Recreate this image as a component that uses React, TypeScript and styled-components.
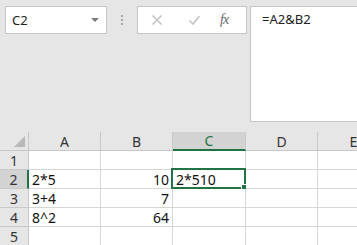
import React from 'react'
import styled, { createGlobalStyle } from 'styled-components'

const GlobalStyle = createGlobalStyle`
    html, body {
        margin: 0;
        padding: 0;
        background: #e6e6e6;
        overflow: hidden;
    }
    body {
        font-family: "Noto Sans", "Liberation Sans", sans-serif;
    }
`

const Page = styled.div`
    width: 357px;
    height: 245px;
    display: flex;
    flex-direction: column;
    background: #e6e6e6;
    overflow: hidden;
`

const FormulaArea = styled.div`
    display: flex;
    align-items: flex-start;
    padding: 6px 0 0 5px;
    height: 132px;
    flex-shrink: 0;
    box-sizing: border-box;
`

const NameBox = styled.div`
    width: 102px;
    height: 28px;
    box-sizing: border-box;
    border: 1px solid #c6c6c6;
    background: #fff;
    display: flex;
    align-items: center;
    justify-content: space-between;
    padding: 0 7px 0 6px;
    font-size: 13px;
    color: #222;
`

const Caret = styled.span`
    width: 0;
    height: 0;
    border-left: 4px solid transparent;
    border-right: 4px solid transparent;
    border-top: 4px solid #7a7a7a;
`

const Grip = styled.div`
    width: 30px;
    height: 28px;
    display: flex;
    flex-direction: column;
    align-items: center;
    justify-content: center;
    gap: 2px;
    span {
        width: 2px;
        height: 2px;
        background: #a8a8a8;
    }
`

const ButtonBox = styled.div`
    width: 110px;
    height: 28px;
    box-sizing: border-box;
    border: 1px solid #c6c6c6;
    background: #fff;
    display: flex;
    align-items: center;
    padding-left: 13px;
`

const IconSlot = styled.span<{ $gap: number }>`
    display: flex;
    margin-left: ${p => p.$gap}px;
`

const Fx = styled.span`
    font-family: "Liberation Serif", "DejaVu Serif", serif;
    font-style: italic;
    font-size: 14px;
    color: #666;
    margin-left: 19px;
    letter-spacing: -1px;
`

const FormulaInput = styled.div`
    flex: 1;
    margin-left: 3px;
    height: 116px;
    box-sizing: border-box;
    border-left: 1px solid #c6c6c6;
    border-top: 1px solid #c6c6c6;
    border-bottom: 1px solid #c6c6c6;
    background: #fff;
    padding: 3px 0 0 11px;
    font-size: 13px;
    color: #222;
`

const Sheet = styled.div`
    display: grid;
    grid-template-columns: 29px 72px 72px 73px 72px 72px;
    grid-auto-rows: 19px;
    width: max-content;
`

const Head = styled.div<{ $active?: boolean; $row?: boolean }>`
    box-sizing: border-box;
    background: ${p => (p.$active ? '#d3d3d3' : '#e6e6e6')};
    border-right: 1px solid ${p => (p.$active && p.$row ? '#217346' : '#c8c8c8')};
    border-bottom: 1px solid ${p => (p.$active && !p.$row ? '#217346' : '#c8c8c8')};
    ${p => p.$active && p.$row && 'border-right-width: 2px;'}
    ${p => p.$active && !p.$row && 'border-bottom-width: 2px;'}
    display: flex;
    align-items: center;
    justify-content: center;
    font-size: 14px;
    color: ${p => (p.$active && !p.$row ? '#217346' : '#333')};
    overflow: hidden;
`

const Corner = styled(Head)`
    position: relative;
    &::after {
        content: '';
        position: absolute;
        right: 3px;
        bottom: 3px;
        width: 0;
        height: 0;
        border-left: 11px solid transparent;
        border-bottom: 11px solid #b8b8b8;
    }
`

const Cell = styled.div<{ $num?: boolean; $active?: boolean }>`
    position: relative;
    box-sizing: border-box;
    background: #fff;
    border-right: 1px solid #d6d6d6;
    border-bottom: 1px solid #d6d6d6;
    display: flex;
    align-items: center;
    justify-content: ${p => (p.$num ? 'flex-end' : 'flex-start')};
    padding: 0 3px;
    font-size: 14px;
    color: #111;
    white-space: nowrap;
    ${p =>
        p.$active &&
        `
        &::before {
            content: '';
            position: absolute;
            left: -2px;
            top: -2px;
            right: -1px;
            bottom: -1px;
            border: 2px solid #217346;
            pointer-events: none;
        }
        &::after {
            content: '';
            position: absolute;
            right: -3px;
            bottom: -3px;
            width: 5px;
            height: 5px;
            background: #217346;
            border: 1px solid #fff;
        }
    `}
`

const cols = ['A', 'B', 'C', 'D', 'E']

const data: { [key: string]: { v: string; num?: boolean } } = {
    A2: { v: '2*5' },
    B2: { v: '10', num: true },
    C2: { v: '2*510' },
    A3: { v: '3+4' },
    B3: { v: '7', num: true },
    A4: { v: '8^2' },
    B4: { v: '64', num: true },
}

const CrossIcon = () => (
    <svg width="12" height="12" viewBox="0 0 12 12">
        <path d="M1.5 1.5 L10.5 10.5 M10.5 1.5 L1.5 10.5" stroke="#c4c4c4" strokeWidth="1.6" fill="none" />
    </svg>
)

const CheckIcon = () => (
    <svg width="13" height="12" viewBox="0 0 13 12">
        <path d="M1.5 6.5 L5 10 L11.5 2" stroke="#c4c4c4" strokeWidth="1.6" fill="none" />
    </svg>
)

export default function App() {
    return (
        <>
            <GlobalStyle />
            <Page>
                <FormulaArea>
                    <NameBox>
                        <span>C2</span>
                        <Caret />
                    </NameBox>
                    <Grip>
                        <span />
                        <span />
                        <span />
                    </Grip>
                    <ButtonBox>
                        <IconSlot $gap={0}>
                            <CrossIcon />
                        </IconSlot>
                        <IconSlot $gap={25}>
                            <CheckIcon />
                        </IconSlot>
                        <Fx>fx</Fx>
                    </ButtonBox>
                    <FormulaInput>=A2&amp;B2</FormulaInput>
                </FormulaArea>
                <Sheet>
                    <Corner />
                    {cols.map(c => (
                        <Head key={c} $active={c === 'C'}>
                            {c}
                        </Head>
                    ))}
                    {[1, 2, 3, 4, 5].map(r => (
                        <React.Fragment key={r}>
                            <Head $row $active={r === 2}>
                                {r}
                            </Head>
                            {cols.map(c => {
                                const d = data[c + r]
                                return (
                                    <Cell key={c} $num={d?.num} $active={c + r === 'C2'}>
                                        {d?.v}
                                    </Cell>
                                )
                            })}
                        </React.Fragment>
                    ))}
                </Sheet>
            </Page>
        </>
    )
}
